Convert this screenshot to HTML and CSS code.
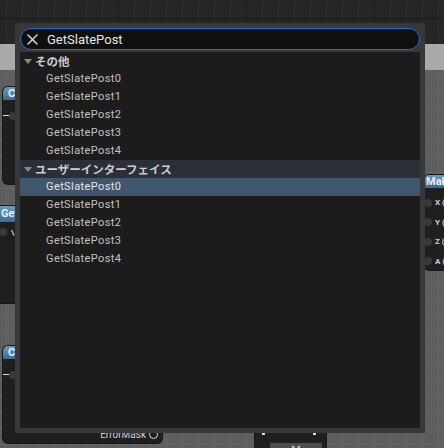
FILE: index.html
```html
<!DOCTYPE html>
<html lang="ja">
<head>
<meta charset="utf-8">
<title>GetSlatePost</title>
<link rel="stylesheet" href="styles.css">
</head>
<body>
<div class="graph">
  <div class="band-light"></div>
  <div class="area-gray"></div>

  <div class="node node-a">
    <div class="node-head">C</div>
    <div class="pin-row"><span class="wire"></span><span class="pin"></span></div>
  </div>

  <div class="node node-b">
    <div class="node-head">Get</div>
    <div class="pin-row"><span class="pin"></span><span class="pin-label">\</span></div>
  </div>

  <div class="node node-c">
    <div class="node-head">C</div>
    <div class="pin-row"><span class="wire"></span><span class="pin"></span></div>
    <div class="node-foot"><span class="foot-label">ErrorMask</span><span class="pin-ring"></span></div>
  </div>

  <div class="node node-d">
    <div class="node-head">Make</div>
    <div class="pins">
      <div class="pin-row"><span class="pin"></span><span class="pin-label">X (</span></div>
      <div class="pin-row"><span class="pin"></span><span class="pin-label">Y (</span></div>
      <div class="pin-row"><span class="pin"></span><span class="pin-label">Z (</span></div>
      <div class="pin-row"><span class="pin"></span><span class="pin-label">A (</span></div>
    </div>
  </div>

  <div class="node node-e">
    <div class="dots"><span></span><span></span></div>
    <div class="expander">
      <svg width="10" height="6" viewBox="0 0 10 6"><path d="M1 1 L5 5 L9 1" fill="none" stroke="#e0e0e0" stroke-width="1.4"/></svg>
    </div>
  </div>
</div>

<div class="popup">
  <div class="search">
    <svg class="clear" width="11" height="11" viewBox="0 0 11 11"><path d="M1 1 L10 10 M10 1 L1 10" stroke="#d6d6d6" stroke-width="1.5" stroke-linecap="round"/></svg>
    <span class="query">GetSlatePost</span>
  </div>
  <div class="list">
    <div class="cat"><span class="tri"></span><span>その他</span></div>
    <div class="item">GetSlatePost0</div>
    <div class="item">GetSlatePost1</div>
    <div class="item">GetSlatePost2</div>
    <div class="item">GetSlatePost3</div>
    <div class="item">GetSlatePost4</div>
    <div class="cat cat-hover"><span class="tri"></span><span>ユーザーインターフェイス</span></div>
    <div class="item selected">GetSlatePost0</div>
    <div class="item">GetSlatePost1</div>
    <div class="item">GetSlatePost2</div>
    <div class="item">GetSlatePost3</div>
    <div class="item">GetSlatePost4</div>
  </div>
</div>
</body>
</html>
```

FILE: styles.css
```css
html, body {
  margin: 0;
  padding: 0;
}
body {
  width: 444px;
  height: 448px;
  overflow: hidden;
  position: relative;
  background: #262626;
  font-family: Roboto, "Noto Sans CJK JP", sans-serif;
}

/* ---------- background graph (free canvas) ---------- */
.graph {
  position: absolute;
  inset: 0;
  background-color: #262626;
  background-image:
    linear-gradient(to right, #1c1c1c 1px, transparent 1px),
    linear-gradient(to bottom, #1c1c1c 1px, transparent 1px),
    linear-gradient(to right, #2c2c2c 1px, transparent 1px),
    linear-gradient(to bottom, #2c2c2c 1px, transparent 1px);
  background-size: 128px 128px, 128px 128px, 16px 16px, 16px 16px;
  background-position: 118px 0, 0 18px, 6px 0, 0 2px;
}
.band-light {
  position: absolute;
  left: 0; right: 0;
  top: 44px;
  height: 26px;
  background: #a9a9a9;
}
.area-gray {
  position: absolute;
  left: 0; right: 0;
  top: 70px;
  bottom: 0;
  background-color: #5e5e5e;
  background-image:
    linear-gradient(to right, #666 1px, transparent 1px),
    linear-gradient(to bottom, #666 1px, transparent 1px);
  background-size: 16px 16px, 16px 16px;
  background-position: 6px 0, 0 6px;
}
.node {
  position: absolute;
  background: #1f1f1f;
  border-radius: 5px;
  box-shadow: 0 0 0 1px #151515;
  overflow: hidden;
  color: #d8d8d8;
  font-size: 10px;
}
.node-head {
  height: 13px;
  line-height: 13px;
  padding-left: 5px;
  background: linear-gradient(#6d9ac0, #3d6a91);
  color: #e8eef4;
  font-weight: 700;
  font-size: 11px;
  white-space: nowrap;
}
.pin-row {
  display: flex;
  align-items: center;
  height: 19px;
  gap: 4px;
}
.pin {
  width: 8px;
  height: 8px;
  border-radius: 50%;
  background: #3a3a3a;
  flex: none;
}
.pin-label {
  font-size: 8px;
  font-weight: 700;
  color: #cfcfcf;
}
.wire {
  width: 9px;
  height: 1px;
  background: #e0e0e0;
  margin-left: -3px;
  margin-right: -4px;
}
.node-a { left: 3px; top: 87px; width: 40px; height: 97px; }
.node-a .pin-row { margin-top: 6px; }
.node-b { left: -6px; top: 206px; width: 40px; height: 97px; }
.node-b .node-head { padding-left: 7px; height: 16px; line-height: 16px; }
.node-b .pin-row { padding-left: 5px; height: 20px; }
.node-c { left: 3px; top: 346px; width: 159px; height: 97px; }
.node-c .pin-row { margin-top: 6px; }
.node-foot {
  position: absolute;
  right: 4px;
  bottom: 3px;
  display: flex;
  align-items: center;
  gap: 3px;
}
.foot-label { font-size: 10px; color: #d0d0d0; }
.pin-ring {
  width: 7px; height: 7px;
  border: 1.5px solid #e0e0e0;
  border-radius: 50%;
}
.node-d { left: 425px; top: 175px; width: 40px; height: 95px; border-radius: 4px 0 0 4px; }
.node-d .node-head { padding-left: 1px; font-size: 11px; }
.node-d .pins { padding-top: 5px; }
.node-d .pin-row { height: 19.5px; gap: 3px; margin-left: -1px; }
.node-e {
  left: 255px; top: 400px;
  width: 71px; height: 60px;
  border-radius: 4px;
}
.dots {
  position: absolute;
  top: 33px;
  left: 7px; right: 10px;
  display: flex;
  justify-content: space-between;
}
.dots span { width: 3px; height: 2px; background: #ddd; }
.expander {
  position: absolute;
  left: 15px; top: 43px;
  width: 52px; height: 20px;
  background: #4d4d4d;
  display: flex;
  justify-content: center;
  padding-top: 2px;
  box-sizing: border-box;
}

/* ---------- popup ---------- */
.popup {
  position: absolute;
  left: 15px;
  top: 23px;
  width: 410px;
  height: 410px;
  box-sizing: border-box;
  padding: 5px;
  background: #383838;
  display: flex;
  flex-direction: column;
  gap: 2px;
}
.search {
  height: 22px;
  box-sizing: border-box;
  border: 1.5px solid #1d6fd6;
  border-radius: 11px;
  background: #0f0f0f;
  display: flex;
  align-items: center;
  gap: 9px;
  padding-left: 6px;
  flex: none;
}
.clear { flex: none; }
.query {
  color: #e6e6e6;
  font-size: 13px;
}
.list {
  flex: 1;
  background: #1c1c1c;
  display: flex;
  flex-direction: column;
}
.cat {
  height: 18px;
  display: flex;
  align-items: center;
  gap: 3px;
  padding-left: 4px;
  color: #cdcdcd;
  font-weight: 700;
  font-size: 11.5px;
  font-family: "Noto Sans CJK JP", sans-serif;
}
.cat-hover { background: #2b3038; }
.tri {
  width: 0; height: 0;
  border-left: 4px solid transparent;
  border-right: 4px solid transparent;
  border-top: 5px solid #8a8a8a;
  margin-top: 1px;
}
.item {
  height: 18px;
  line-height: 18px;
  padding-left: 26px;
  color: #c2c2c2;
  font-size: 11px;
  letter-spacing: 0.4px;
}
.item.selected {
  background: #3f566e;
  color: #e4e4e4;
}
```
